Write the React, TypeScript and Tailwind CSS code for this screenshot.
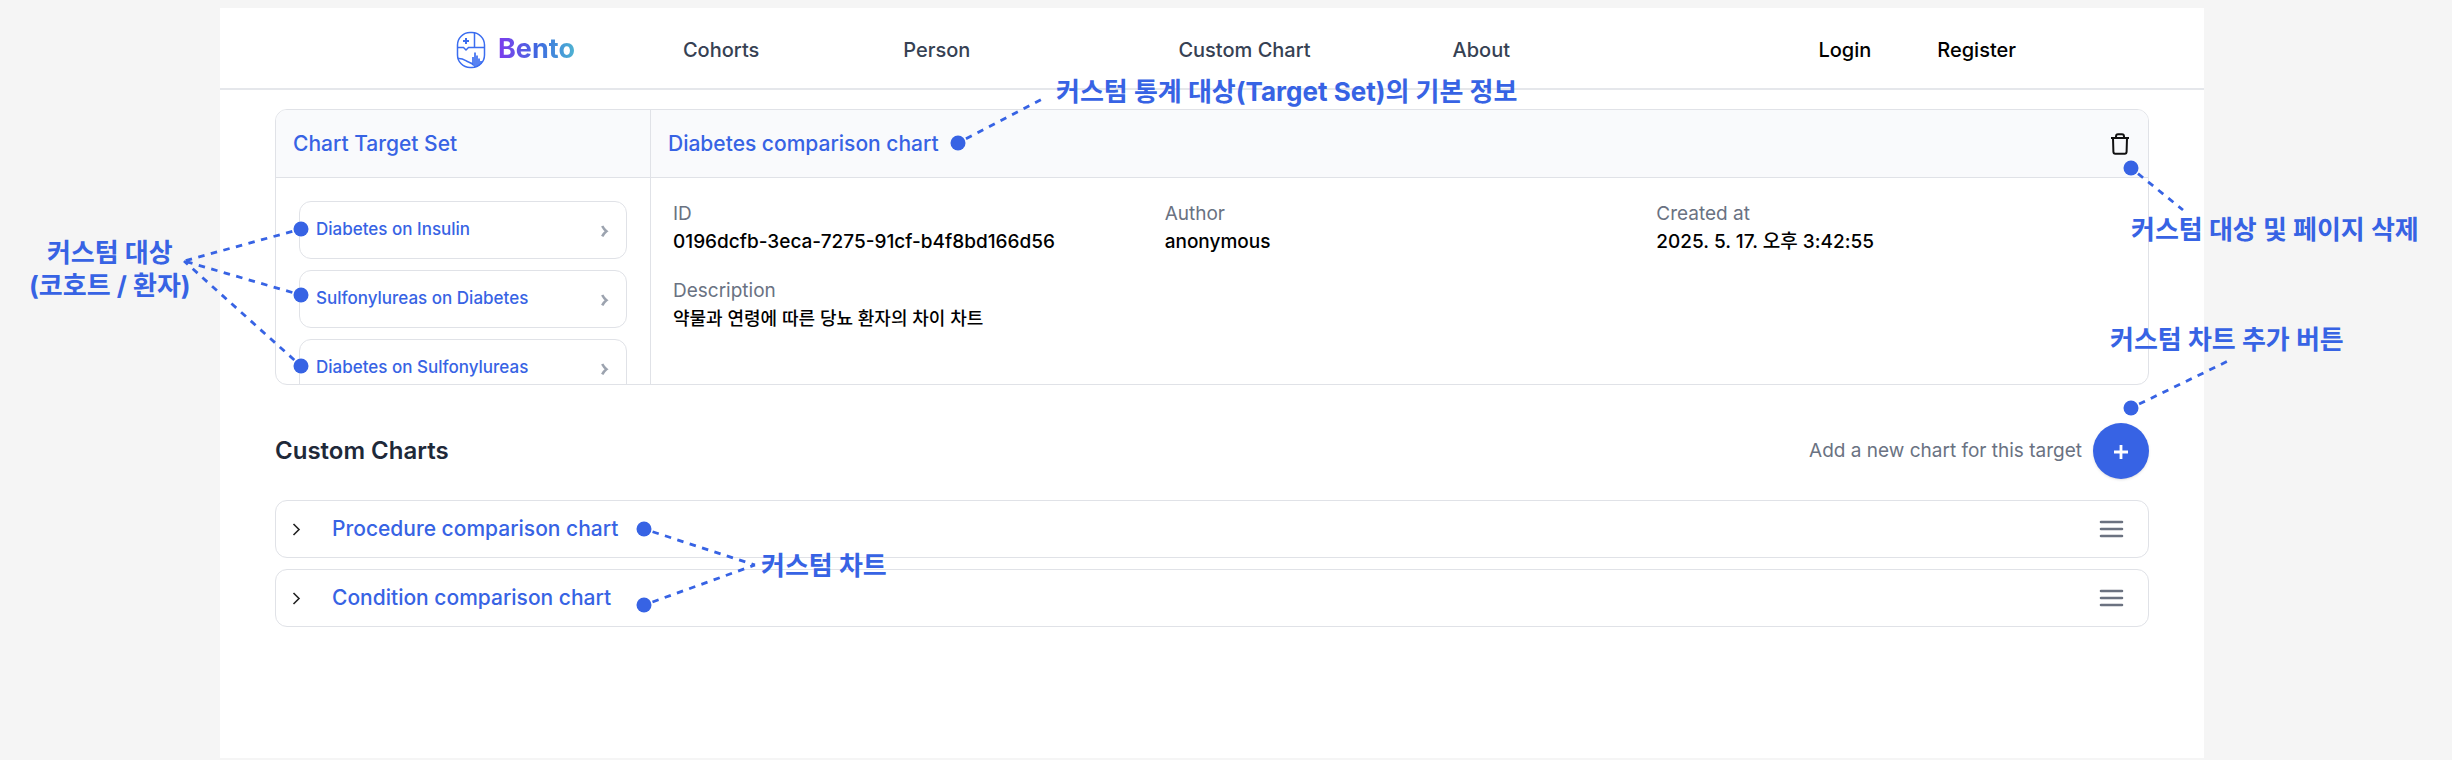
import React from "react";

const targets = ["Diabetes on Insulin", "Sulfonylureas on Diabetes", "Diabetes on Sulfonylureas"];
const charts = ["Procedure comparison chart", "Condition comparison chart"];

function BentoMark() {
  return (
    <svg width="30" height="38" viewBox="0 0 30 38" fill="none" stroke="#3b6df0" strokeWidth="1.5" aria-hidden="true">
      <rect x="1.5" y="1.5" width="27" height="35" rx="12.5" />
      <path d="M1.5 16.5H7.5L10 19L12.5 16.5H28.5M18.5 1.5V16.5" />
      <path d="M10 7V13M7 10H13" strokeWidth="2" />
      <path d="M2 27.5C7.5 27 9.5 30 12.5 31C15 31.8 16.5 32.5 18 34.5" />
      <path d="M17 26V33M19 21.5V36M21 24.5V36M23 27.5V34.5M25 30V33" strokeWidth="1.7" />
    </svg>
  );
}

function TrashIcon() {
  return (
    <svg width="20" height="24" viewBox="0 0 20 24" fill="none" stroke="#111" strokeWidth="2" strokeLinejoin="round" aria-hidden="true">
      <path d="M1 6H19M6 6V4.6Q6 2.2 8 2.2H12Q14 2.2 14 4.6V6M3 6L3.4 19.8Q3.5 21.8 5.2 21.8H14.8Q16.5 21.8 16.6 19.8L17 6" />
    </svg>
  );
}

function TargetCard({ name }: { name: string }) {
  return (
    <button
      type="button"
      className="flex h-[58px] w-full shrink-0 items-center justify-between rounded-xl border border-[#e0e2e7] bg-white pl-[16px] pr-[17px] text-left text-[17px] font-medium text-[#3763e4]"
    >
      {name}
      <svg width="8" height="13" viewBox="0 0 8 13" fill="none" stroke="#9ca3af" strokeWidth="2.6" aria-hidden="true">
        <path d="M1.2 2Q3 5.4 5.4 7.2Q3 9 1.2 12.4" />
      </svg>
    </button>
  );
}

function Field({ label, value }: { label: string; value: string }) {
  return (
    <div>
      <dt className="text-[19px] leading-7 text-gray-500">{label}</dt>
      <dd className="text-[19px] font-medium leading-7 text-black">{value}</dd>
    </div>
  );
}

function ChartRow({ name }: { name: string }) {
  return (
    <li className="flex h-[58px] items-center rounded-xl border border-[#e0e2e7] bg-white pl-[16px] pr-[24px]">
      <button type="button" className="flex items-center gap-[31px] text-[21px] font-medium text-[#3763e4]">
        <svg width="9" height="13" viewBox="0 0 9 13" fill="none" stroke="#222" strokeWidth="1.6" aria-hidden="true">
          <path d="M1.5 1L7 6.5L1.5 12" />
        </svg>
        {name}
      </button>
      <button type="button" aria-label="Reorder" className="ml-auto">
        <svg width="25" height="20" viewBox="0 0 25 20" stroke="#6b7280" strokeWidth="2.6" strokeLinecap="round" aria-hidden="true">
          <path d="M2 3H23M2 10H23M2 17H23" />
        </svg>
      </button>
    </li>
  );
}

const dots = [
  [301, 229],
  [301, 295],
  [301, 366],
  [958, 143],
  [2131, 168],
  [2131, 408],
  [644, 529],
  [644, 605],
];

const leaders = [
  "M301 229L184 261",
  "M301 295L184 261",
  "M301 366L184 261",
  "M958 143L1046 97",
  "M2131 168L2183 210",
  "M2131 408L2228 361",
  "M644 529L755 565",
  "M644 605L755 565",
];

function Annotations() {
  return (
    <div className="pointer-events-none absolute left-0 top-0 h-[760px] w-[2452px] whitespace-nowrap text-[26px] font-bold leading-[33px] text-[#3763e4]">
      <svg width="2452" height="760" viewBox="0 0 2452 760" fill="none" stroke="#3763e4" strokeWidth="2.8" strokeDasharray="6.5 6.5" aria-hidden="true">
        {leaders.map((d) => (
          <path key={d} d={d} strokeDashoffset="-9" />
        ))}
        {dots.map(([x, y]) => (
          <circle key={x + "-" + y} cx={x} cy={y} r="7.5" fill="#3763e4" stroke="none" />
        ))}
      </svg>
      <p className="absolute left-[29px] top-[236px] text-center">
        커스텀 대상
        <br />
        (코호트 / 환자)
      </p>
      <p className="absolute left-[1056px] top-[75px]">커스텀 통계 대상(Target Set)의 기본 정보</p>
      <p className="absolute left-[2131px] top-[213px]">커스텀 대상 및 페이지 삭제</p>
      <p className="absolute left-[2110px] top-[323px]">커스텀 차트 추가 버튼</p>
      <p className="absolute left-[761px] top-[549px]">커스텀 차트</p>
    </div>
  );
}

export default function App() {
  return (
    <div className="relative flex min-h-screen flex-col overflow-hidden bg-[#f5f5f5] pb-0.5 pl-[220px] pr-[248px] pt-2 font-['Inter','Noto_Sans_CJK_KR',sans-serif]">
      <div className="grow bg-white">
        <header className="flex h-[82px] items-center border-b-2 border-gray-200 pl-[236px] pr-[188px] pt-[3px] text-[20px] font-medium text-gray-700">
          <a href="#" className="flex items-center gap-3">
            <BentoMark />
            <span className="bg-linear-to-r from-[#7c3aed] via-[#3f66e0] to-[#4fb3d1] bg-clip-text text-[27px] font-bold text-transparent">
              Bento
            </span>
          </a>
          <nav className="ml-[108px] flex gap-[208px]">
            <div className="flex gap-36">
              <a href="#">Cohorts</a>
              <a href="#">Person</a>
            </div>
            <div className="flex gap-[142px]">
              <a href="#">Custom Chart</a>
              <a href="#">About</a>
            </div>
          </nav>
          <div className="ml-auto flex gap-[66px] text-black">
            <a href="#">Login</a>
            <a href="#">Register</a>
          </div>
        </header>

        <main className="px-[55px] pt-[19px]">
          <section className="grid h-[276px] grid-cols-[375px_1fr] grid-rows-[68px_1fr] overflow-hidden rounded-xl border border-[#e0e2e7]">
            <h2 className="flex items-center border-b border-r border-[#e0e2e7] bg-[#f9fafc] pl-[17px] pt-px text-[21px] font-medium text-[#3763e4]">
              Chart Target Set
            </h2>
            <div className="flex items-center justify-between border-b border-[#e0e2e7] bg-[#f9fafc] pl-[17px] pr-[18px] pt-px">
              <h2 className="text-[21px] font-medium text-[#3763e4]">Diabetes comparison chart</h2>
              <button type="button" aria-label="Delete target set">
                <TrashIcon />
              </button>
            </div>
            <div className="flex min-h-0 flex-col gap-[11px] overflow-hidden border-r border-[#e0e2e7] px-[23px] pt-[23px]">
              {targets.map((t) => (
                <TargetCard key={t} name={t} />
              ))}
            </div>
            <dl className="grid grid-cols-3 content-start gap-x-[22px] gap-y-[21px] px-[22px] pt-[22px]">
              <Field label="ID" value="0196dcfb-3eca-7275-91cf-b4f8bd166d56" />
              <Field label="Author" value="anonymous" />
              <Field label="Created at" value="2025. 5. 17. 오후 3:42:55" />
              <div>
                <dt className="text-[19px] leading-7 text-gray-500">Description</dt>
                <dd className="text-[18px] font-medium leading-7 text-black">약물과 연령에 따른 당뇨 환자의 차이 차트</dd>
              </div>
            </dl>
          </section>

          <section className="pt-[38px]">
            <div className="flex items-center justify-between">
              <h2 className="text-[24px] font-semibold text-gray-800">Custom Charts</h2>
              <div className="flex items-center gap-[11px] text-[19px] text-gray-500">
                Add a new chart for this target
                <button
                  type="button"
                  aria-label="Add chart"
                  className="flex size-[56px] items-center justify-center rounded-full bg-[#3763e4] shadow"
                >
                  <svg width="16" height="16" viewBox="0 0 16 16" stroke="#fff" strokeWidth="2.8" aria-hidden="true">
                    <path d="M8 2V16M1 9H15" />
                  </svg>
                </button>
              </div>
            </div>
            <ul className="flex flex-col gap-[11px] pt-[21px]">
              {charts.map((c) => (
                <ChartRow key={c} name={c} />
              ))}
            </ul>
          </section>
        </main>
      </div>
      <Annotations />
    </div>
  );
}
